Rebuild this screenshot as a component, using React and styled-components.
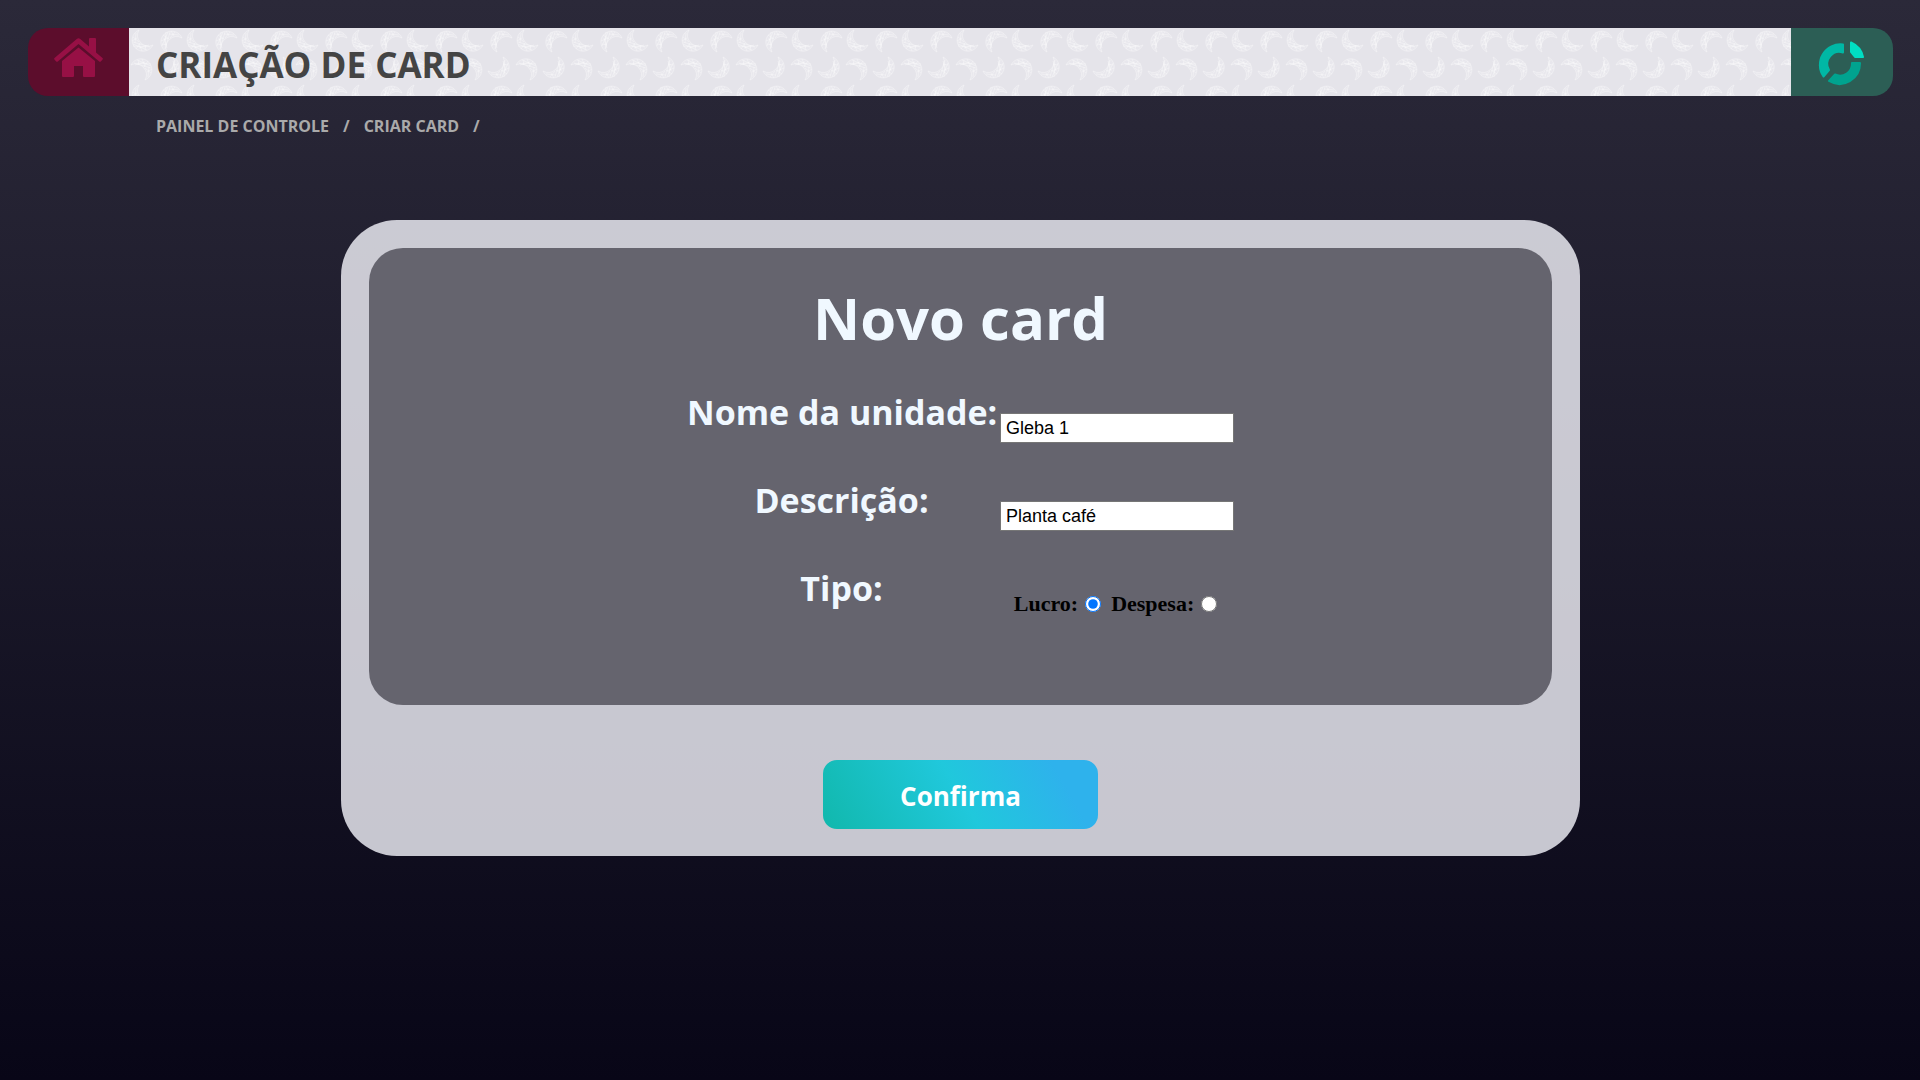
import React from "react";
import styled, { createGlobalStyle } from "styled-components";

const uiFont = '"Open Sans", "Noto Sans", sans-serif';

const outline = "M11 -3A11 11 0 1 0 -4 11A10.8 10.8 0 0 1 11 -3Z";
const hatching = "M-9 5L-3 -9M-6 8L-1 -9M-10 0L-3 -3M-8 -6L-2 -2M-5 -9L-6 4M0 -10L3 -5M-2 -7L8 -6M-9 3L-4 4M-7 -3L-4 7M4 -9L-1 -3";
const crescent = (x, y, angle) =>
  `<g transform="translate(${x} ${y}) rotate(${angle})"><path d="${outline}" fill="#fff" fill-opacity=".12"/><path d="${hatching}"/></g>`;
const moonTile = `url("data:image/svg+xml,${encodeURIComponent(
  `<svg xmlns="http://www.w3.org/2000/svg" width="55" height="55"><g fill="none" stroke="#fff" stroke-opacity=".45" stroke-width=".7">${crescent(42, 13, 0)}${crescent(13, 13, -90)}${crescent(13, 41, 90)}${crescent(40, 40, 180)}</g></svg>`
)}")`;

const GlobalStyle = createGlobalStyle`
  * { box-sizing: border-box; }
  html { min-height: 100%; }
  body {
    margin: 0;
    min-height: 100vh;
    background: linear-gradient(#2b2939, #080617) no-repeat;
    font-family: ${uiFont};
  }
`;

const Page = styled.div`
  min-height: 100vh;
  padding: 28px 27px 28px 28px;
`;

const Header = styled.header`
  display: flex;
  height: 68px;
  border-radius: 20px;
  overflow: hidden;
`;

const HeaderLink = styled.a`
  display: flex;
  flex: 0 0 ${({ $width }) => $width}px;
  align-items: ${({ $align }) => $align};
  justify-content: center;
  padding: ${({ $align }) => ($align === "center" ? "4px 2px 0 0" : "10px 1px 0 0")};
  background: ${({ $color }) => $color};
`;

const TitleBar = styled.div`
  flex: 1;
  display: flex;
  align-items: center;
  padding: 0 27px;
  background: #e5e4ea ${moonTile};
`;

const PageTitle = styled.h1`
  margin: 0;
  padding-top: 6px;
  color: #444;
  font-size: 35px;
  font-weight: 700;
  line-height: 48px;
`;

const Breadcrumb = styled.nav`
  display: flex;
  gap: 14px;
  padding: 20px 128px 0;
  color: #aaa;
  font-size: 16px;
  font-weight: 700;
  line-height: 20px;
`;

const Crumb = styled.a`
  color: inherit;
  text-decoration: none;
`;

const Card = styled.form`
  display: flex;
  flex-direction: column;
  align-items: center;
  max-width: 1239px;
  margin: 84px auto 0;
  padding: 28px 28px 27px;
  border-radius: 56px;
  background: rgba(240, 240, 248, 0.82);
`;

const Panel = styled.div`
  align-self: stretch;
  padding: 30px 0 61px;
  border-radius: 34px;
  background: #65646e;
`;

const CardTitle = styled.h2`
  margin: 0 0 22px;
  color: #f0f8ff;
  font-size: 58px;
  font-weight: 700;
  line-height: 80px;
  text-align: center;
`;

const Fields = styled.div`
  display: grid;
  grid-template-columns: 309px 234px;
  justify-content: center;
  column-gap: 4px;
`;

const labelStyle = `
  color: #f0f8ff;
  font-size: 34px;
  font-weight: 700;
  line-height: 64px;
  height: 88px;
  text-align: center;
  white-space: nowrap;
`;
const FieldLabel = styled.label`${labelStyle}`;
const GroupLabel = styled.span`${labelStyle}`;

const TextInput = styled.input`
  width: 100%;
  height: 30px;
  margin-top: 33px;
  padding: 1px 5px;
  border: 1px solid #767676;
  background: #fff;
  color: #000;
  font: 18px "Liberation Sans", Arial, sans-serif;
`;

const Options = styled.div`
  display: flex;
  justify-content: center;
  gap: 10px;
  margin-top: 33px;
  padding-right: 3px;
`;

const Option = styled.label`
  display: flex;
  align-items: center;
  gap: 7px;
  height: 30px;
  color: #000;
  font: bold 22px "Liberation Serif", "Times New Roman", serif;
`;

const Radio = styled.input`
  width: 16px;
  height: 16px;
  margin: 0;
`;

const Confirm = styled.button`
  width: 275px;
  height: 69px;
  margin-top: 55px;
  padding: 2px 0 0;
  border: 0;
  border-radius: 14px;
  background: linear-gradient(60deg, #11b8ac, #20c8dc 50%, #2eb2ec 85%);
  color: #fff;
  font: 700 26px ${uiFont};
`;

const HomeIcon = () => (
  <svg width="49" height="40" viewBox="0 0 49 40" fill="#971045" aria-hidden="true">
    <path d="M23 .8Q24.500 -.4 26 .8L35 8.500V1Q35 0 36 0H41Q42 0 42 1V14.500L48.500 20Q49.300 20.800 48.600 21.600L46.800 23.500Q46 24.200 45.200 23.500L24.500 6 3.800 23.500Q3 24.200 2.200 23.500L.4 21.600Q-.3 20.800 .5 20Z" />
    <path d="M24.500 9.500 8 23V38Q8 39 9 39H19Q20 39 20 38V28H29V38Q29 39 30 39H40Q41 39 41 38V23Z" />
  </svg>
);

const ChartIcon = () => (
  <svg width="46" height="46" viewBox="0 0 46 46" strokeLinejoin="round" strokeWidth="2" aria-hidden="true">
    <path fill="#00b8a5" stroke="#00b8a5" d="M25 3.500V11.500A12 12 0 0 0 11 29L5.500 35.500A20.500 20.500 0 0 1 25 3.500Z" />
    <path fill="#00a38f" stroke="#00a38f" d="M34 22H42A20.500 20.500 0 0 1 11 40L17 33.500A12 12 0 0 0 34 22Z" />
    <path fill="#00dec3" stroke="#00dec3" d="M33 1.500Q43 6 45 16H37L33 11Z" />
  </svg>
);

export default function App() {
  return (
    <Page>
      <GlobalStyle />
      <Header>
        <HeaderLink href="#inicio" aria-label="Início" $width={101} $color="#5c0d2c" $align="flex-start">
          <HomeIcon />
        </HeaderLink>
        <TitleBar>
          <PageTitle>CRIAÇÃO DE CARD</PageTitle>
        </TitleBar>
        <HeaderLink href="#graficos" aria-label="Gráficos" $width={102} $color="#2c5e55" $align="center">
          <ChartIcon />
        </HeaderLink>
      </Header>
      <Breadcrumb>
        <Crumb href="#painel">PAINEL DE CONTROLE</Crumb>
        <span>/</span>
        <Crumb href="#criar">CRIAR CARD</Crumb>
        <span>/</span>
      </Breadcrumb>
      <Card onSubmit={(event) => event.preventDefault()}>
        <Panel>
          <CardTitle>Novo card</CardTitle>
          <Fields>
            <FieldLabel htmlFor="nome">Nome da unidade:</FieldLabel>
            <TextInput id="nome" type="text" defaultValue="Gleba 1" />
            <FieldLabel htmlFor="descricao">Descrição:</FieldLabel>
            <TextInput id="descricao" type="text" defaultValue="Planta café" />
            <GroupLabel id="tipo">Tipo:</GroupLabel>
            <Options role="radiogroup" aria-labelledby="tipo">
              <Option>
                Lucro:
                <Radio type="radio" name="tipo" value="lucro" defaultChecked />
              </Option>
              <Option>
                Despesa:
                <Radio type="radio" name="tipo" value="despesa" />
              </Option>
            </Options>
          </Fields>
        </Panel>
        <Confirm type="submit">Confirma</Confirm>
      </Card>
    </Page>
  );
}
